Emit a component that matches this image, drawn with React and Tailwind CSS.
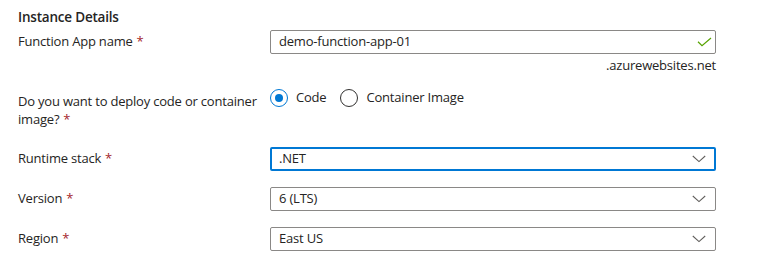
function Req() {
    return <span className="text-[#a4262c] ml-1">*</span>
}

function Chevron() {
    return (
        <svg width="14" height="8" viewBox="0 0 14 8" fill="none" className="text-[#605e5c]">
            <polyline points="0.8,1 7,6.6 13.2,1" stroke="currentColor" strokeWidth="1.1" />
        </svg>
    )
}

function Select({ value, focused }) {
    return (
        <div
            className={`h-6 flex items-center justify-between bg-white rounded-[2px] ${focused ? 'border-2 border-[#0078d4] pl-[7px] pr-2' : 'border border-[#8a8886] pl-2 pr-[9px]'}`}
        >
            <span>{value}</span>
            <Chevron />
        </div>
    )
}

function Radio({ checked, label }) {
    return (
        <label className="flex items-center gap-2 h-[18px]">
            <span
                className={`w-[18px] h-[18px] rounded-full border flex items-center justify-center ${checked ? 'border-[#0078d4]' : 'border-[#323130]'}`}
            >
                {checked && <span className="w-2 h-2 rounded-full bg-[#0078d4]" />}
            </span>
            <span>{label}</span>
        </label>
    )
}

export default function App() {
    return (
        <div className="w-[768px] h-[267px] bg-white text-[#252423] text-[13px] tracking-[-0.2px] font-['Segoe_UI','Open_Sans',sans-serif] pl-[18px] pt-[6px] overflow-hidden">
            <div className="font-semibold text-[13.5px] h-[22px] flex items-center">Instance Details</div>

            <div className="grid grid-cols-[252px_446px] mt-[2px]">
                <div className="h-6 flex items-center">Function App name<Req /></div>
                <div>
                    <div className="h-6 flex items-center justify-between pl-2 pr-[3px] border border-[#8a8886] rounded-[2px]">
                        <span>demo-function-app-01</span>
                        <svg width="15" height="10" viewBox="0 0 15 10" fill="none">
                            <polyline points="1,4.8 5,8.6 14,1" stroke="#57a300" strokeWidth="1.2" />
                        </svg>
                    </div>
                    <div className="text-right h-[22px] leading-[22px]">.azurewebsites.net</div>
                </div>

                <div className="mt-[13px] pt-[3px] leading-[18px]">
                    <div className="whitespace-nowrap">Do you want to deploy code or container</div>
                    <div>image?<Req /></div>
                </div>
                <div className="mt-[13px] flex items-start gap-[14px]">
                    <Radio checked label="Code" />
                    <Radio label="Container Image" />
                </div>

                <div className="h-6 flex items-center mt-[19px]">Runtime stack<Req /></div>
                <div className="mt-[19px]"><Select value=".NET" focused /></div>

                <div className="h-6 flex items-center mt-4">Version<Req /></div>
                <div className="mt-4"><Select value="6 (LTS)" /></div>

                <div className="h-6 flex items-center mt-4">Region<Req /></div>
                <div className="mt-4"><Select value="East US" /></div>
            </div>
        </div>
    )
}
